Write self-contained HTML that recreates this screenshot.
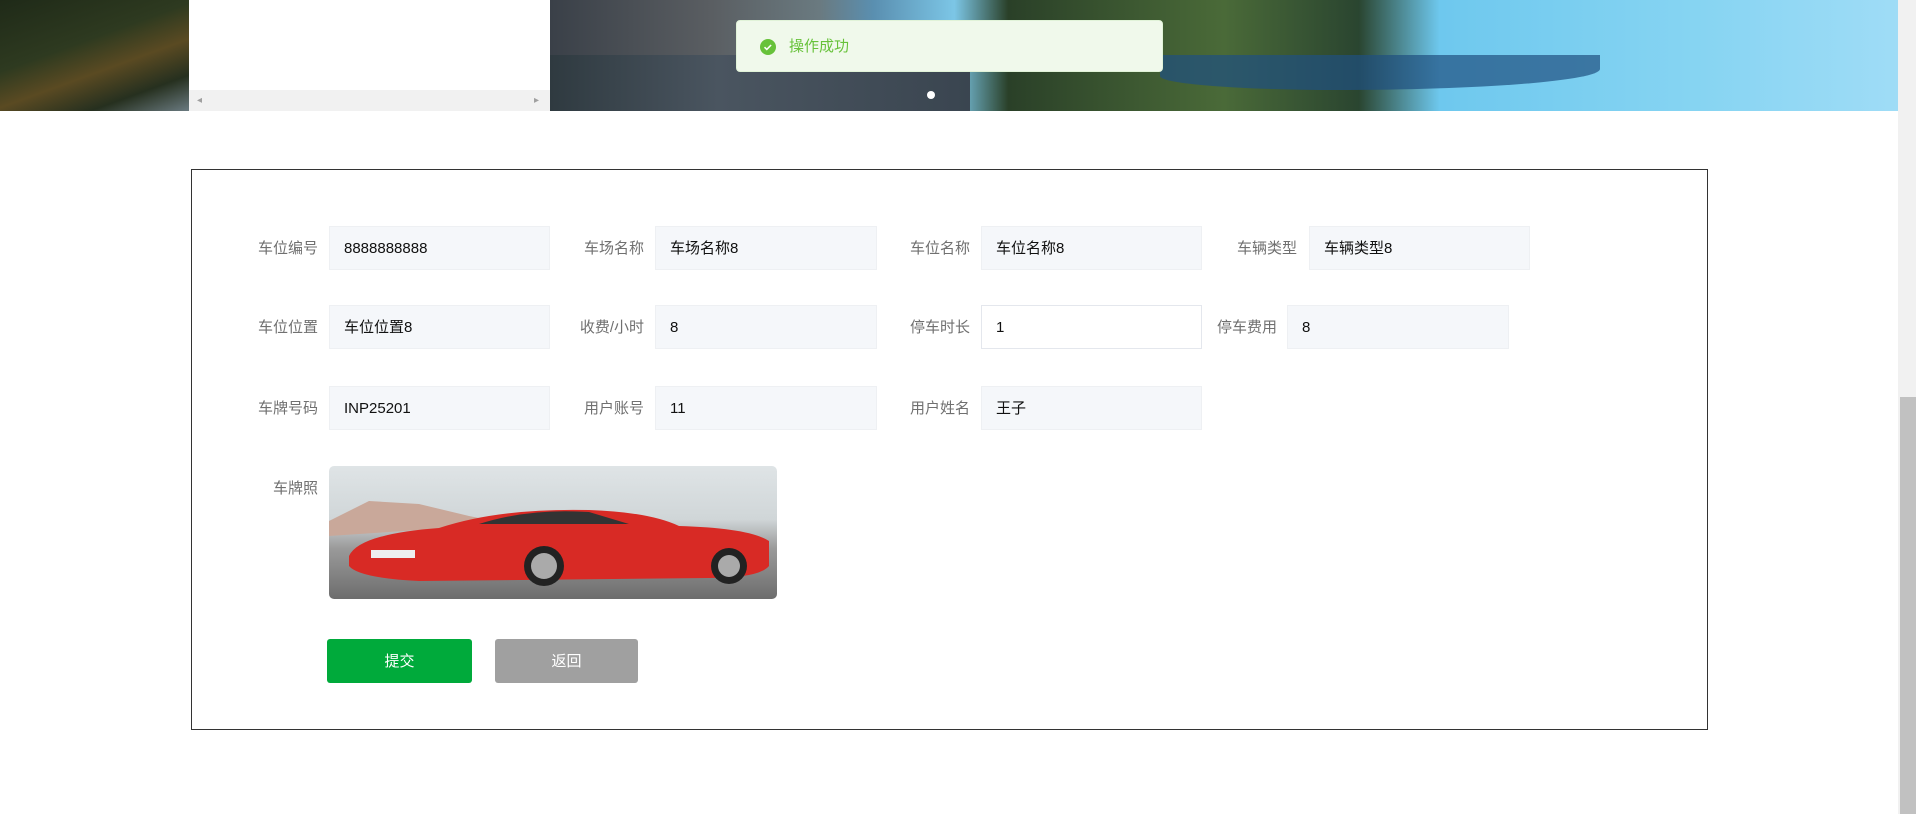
<!DOCTYPE html>
<html><head><meta charset="utf-8"><style>
*{margin:0;padding:0;box-sizing:border-box}
body{width:1916px;height:814px;overflow:hidden;background:#fff;font-family:"Liberation Sans","Noto Sans CJK SC",sans-serif;position:relative}
.a{position:absolute}
.lbl{position:absolute;font-size:15px;color:#707070;text-align:right;width:90px;line-height:46px}
.inp{position:absolute;height:44px;background:#f5f7fa;border:1px solid #eef0f3;font-size:15px;color:#111;line-height:44px;padding-left:14px}
</style></head><body>
<div class="a" style="left:0;top:0;width:189px;height:111px;background:linear-gradient(160deg,#1f2a18 0%,#2e3a20 40%,#5a4a22 60%,#26301f 80%,#6a7a80 100%)"></div>
<div class="a" style="left:189px;top:0;width:361px;height:111px;background:#fff"></div>
<div class="a" style="left:189px;top:90px;width:361px;height:21px;background:#f1f1f1"></div>
<div class="a" style="left:197px;top:95px;color:#a0a0a0;font-size:10px">◂</div>
<div class="a" style="left:534px;top:95px;color:#a0a0a0;font-size:10px">▸</div>
<div class="a" style="left:550px;top:0;width:1348px;height:111px;background:linear-gradient(90deg,#3a4048 0%,#5a5e62 12%,#6a7a80 20%,#5a8fb0 24%,#7cc6e6 30%,#2a4028 34%,#4a6a38 50%,#2a4530 60%,#6ec8ee 66%,#86d4f2 85%,#9fdcf6 100%)"></div>
<div class="a" style="left:550px;top:55px;width:420px;height:56px;background:linear-gradient(90deg,#2f3a40,#4a5560 40%,#3a4550)"></div>
<div class="a" style="left:1160px;top:55px;width:440px;height:35px;background:#1f5080;border-radius:0 0 60% 40%;opacity:.7"></div>
<div class="a" style="left:927px;top:91px;width:8px;height:8px;border-radius:50%;background:#fff"></div>
<div class="a" style="left:1898px;top:0;width:18px;height:814px;background:#f1f1f1"></div>
<div class="a" style="left:1900px;top:397px;width:16px;height:417px;background:#c1c1c1"></div>
<div class="a" style="left:736px;top:20px;width:427px;height:52px;background:#f0f9eb;border:1px solid #e1f3d8;border-radius:4px"></div>
<div class="a" style="left:760px;top:39px;width:16px;height:16px;border-radius:50%;background:#67c23a"><svg width="16" height="16"><path d="M4.5 8.2l2.3 2.2 4.3-4.4" stroke="#fff" stroke-width="1.6" fill="none"/></svg></div>
<div class="a" style="left:789px;top:36px;font-size:15px;color:#67c23a;line-height:22px">操作成功</div>
<div class="a" style="left:191px;top:169px;width:1517px;height:561px;border:1px solid #333"></div>

<div class="lbl" style="left:228px;top:226px">车位编号</div><div class="inp" style="left:329px;top:226px;width:221px">8888888888</div>
<div class="lbl" style="left:554px;top:226px">车场名称</div><div class="inp" style="left:655px;top:226px;width:222px">车场名称8</div>
<div class="lbl" style="left:880px;top:226px">车位名称</div><div class="inp" style="left:981px;top:226px;width:221px">车位名称8</div>
<div class="lbl" style="left:1207px;top:226px">车辆类型</div><div class="inp" style="left:1309px;top:226px;width:221px">车辆类型8</div>

<div class="lbl" style="left:228px;top:305px">车位位置</div><div class="inp" style="left:329px;top:305px;width:221px">车位位置8</div>
<div class="lbl" style="left:554px;top:305px">收费/小时</div><div class="inp" style="left:655px;top:305px;width:222px">8</div>
<div class="lbl" style="left:880px;top:305px">停车时长</div><div class="inp" style="left:981px;top:305px;width:221px;background:#fff;border-color:#e4e7ed">1</div>
<div class="lbl" style="left:1187px;top:305px">停车费用</div><div class="inp" style="left:1287px;top:305px;width:222px">8</div>

<div class="lbl" style="left:228px;top:386px">车牌号码</div><div class="inp" style="left:329px;top:386px;width:221px">INP25201</div>
<div class="lbl" style="left:554px;top:386px">用户账号</div><div class="inp" style="left:655px;top:386px;width:222px">11</div>
<div class="lbl" style="left:880px;top:386px">用户姓名</div><div class="inp" style="left:981px;top:386px;width:221px">王子</div>

<div class="lbl" style="left:228px;top:466px">车牌照</div>
<div class="a" style="left:329px;top:466px;width:448px;height:133px;border-radius:5px;overflow:hidden;background:linear-gradient(180deg,#dfe4e6 0%,#d0d6d8 40%,#9a9a9a 62%,#6d6d6d 100%)">
<svg width="448" height="133" style="position:absolute;left:0;top:0">
<path d="M0 55 L40 35 L90 38 L140 50 L180 58 L0 70Z" fill="#c9a89a"/>
<path d="M20 90 Q30 68 110 62 Q170 42 260 44 Q320 46 350 60 Q420 62 440 75 L440 100 Q430 112 380 112 L90 115 Q30 112 20 100Z" fill="#d82a25"/>
<path d="M150 58 Q200 42 260 46 L300 58Z" fill="#333"/>
<circle cx="215" cy="100" r="20" fill="#222"/><circle cx="215" cy="100" r="13" fill="#aaa"/>
<circle cx="400" cy="100" r="18" fill="#222"/><circle cx="400" cy="100" r="11" fill="#aaa"/>
<rect x="42" y="84" width="44" height="8" fill="#eee"/>
</svg></div>

<div class="a" style="left:327px;top:639px;width:145px;height:44px;background:#00aa3b;border-radius:3px;color:#fff;font-size:15px;text-align:center;line-height:46px">提交</div>
<div class="a" style="left:495px;top:639px;width:143px;height:44px;background:#a0a0a0;border-radius:3px;color:#fff;font-size:15px;text-align:center;line-height:46px">返回</div>
</body></html>
